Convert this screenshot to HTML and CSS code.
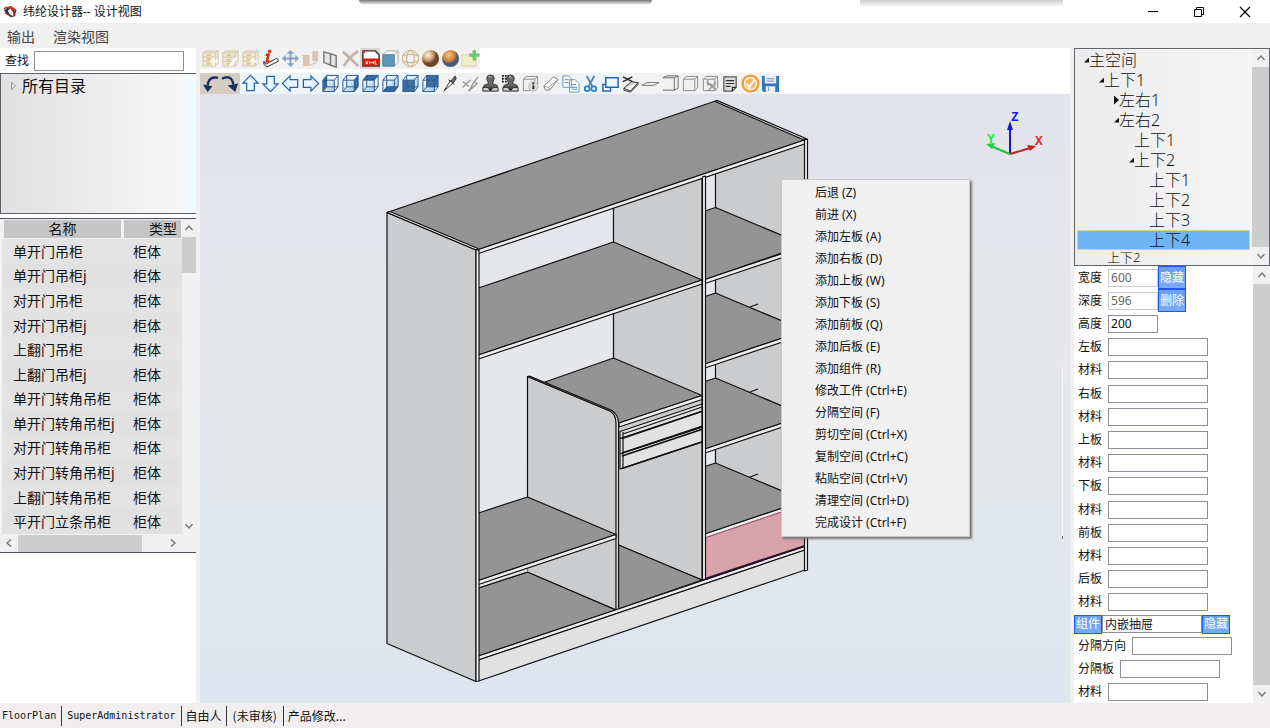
FILE: index.html
```html
<!DOCTYPE html>
<html lang="zh-CN">
<head>
<meta charset="utf-8">
<title>纬纶设计器-- 设计视图</title>
<link rel="stylesheet" href="styles.css">
</head>
<body>
<svg class="defs" aria-hidden="true">
  <defs>
    <symbol id="drawer" viewBox="0 0 20 20"><path d="M2 4l3-2h13v13l-3 3H2z" fill="#f2e3bb" stroke="#b9a88a"/><path d="M2 4h13v14M15 4l3-2M2 8.500h13M2 13h13" fill="none" stroke="#b9a88a"/><path d="M6 6.500h4M6 11h4M6 15.500h4" stroke="#d0a63c" stroke-width="2"/></symbol>
    <symbol id="wire" viewBox="0 0 20 20"><path d="M2 6.500h12v12H2zM6 1.500h12v12h-12zM2 6.500l4-5M14 6.500l4-5M14 18.500l4-5M2 18.500l4-5" fill="none" stroke="#2a568c"/></symbol>
    <symbol id="box" viewBox="0 0 20 20"><path d="M2.500 5.500h12v12h-12zM2.500 5.500l3-3h12v12l-3 3M14.500 5.500l3-3" fill="none" stroke="#888"/></symbol>
    <symbol id="stamp" viewBox="0 0 20 20"><path d="M8 10L6 5q0-4 4-4t4 4l-2 5 5 2v3H3v-3z" fill="#666" stroke="#333"/><path d="M2 14h16v4H2z" fill="#ccc" stroke="#222"/><path d="M8 3q2-1 3 1" stroke="#ddd" fill="none"/><path d="M7 15h6l-3 3z" fill="#111"/></symbol>
    <symbol id="arrow" viewBox="0 0 20 20"><path d="M10 1.500l8 8h-4v8H6v-8H2z" fill="#e9f5ff" stroke="#2a62a5" stroke-width="1.300"/></symbol>
    <symbol id="up" viewBox="0 0 10 10"><path d="M1.500 7L5 3l3.500 4" fill="none" stroke="#777" stroke-width="1.400"/></symbol>
    <radialGradient id="ball1" cx=".35" cy=".3"><stop offset="0" stop-color="#fff4de"/><stop offset=".6" stop-color="#d0a276"/><stop offset="1" stop-color="#6b4526"/></radialGradient>
    <radialGradient id="ball2" cx=".4" cy=".3"><stop offset="0" stop-color="#f8c880"/><stop offset=".7" stop-color="#cb8434"/><stop offset="1" stop-color="#4a5874"/></radialGradient>
    <linearGradient id="glass" x2="1" y2="1"><stop offset="0" stop-color="#fff"/><stop offset="1" stop-color="#9cc4ec"/></linearGradient>
  </defs>
</svg>

<header class="titlebar">
  <svg class="logo" viewBox="0 0 16 16" aria-hidden="true"><path d="M1 7l6-5 7 4-1 7-5 1-5-5z" fill="#333"/><path d="M4 4l5-2 6 5-3 1z" fill="#c9341d"/><path d="M5 7l3-2 3 4v4l-4-2z" fill="#eee"/><path d="M1 5l4-2M2 9l4 3M12 9v3" stroke="#a33" stroke-width="1.500"/></svg>
  <h1 class="title">纬纶设计器-- 设计视图</h1>
  <span class="shade shade-a"></span><span class="shade shade-b"></span>
  <div class="window-buttons">
    <button aria-label="最小化"><svg viewBox="0 0 12 12"><path d="M1 5.500h10" stroke="#000"/></svg></button>
    <button aria-label="还原"><svg viewBox="0 0 12 12"><path d="M1.500 3.500h7v7h-7zM3.500 3.500v-2h7v7h-2" fill="none" stroke="#000"/></svg></button>
    <button aria-label="关闭"><svg viewBox="0 0 12 12"><path d="M1 1l10 10M11 1L1 11" stroke="#000" stroke-width="1.200"/></svg></button>
  </div>
</header>
<nav class="menubar"><button>输出</button><button>渲染视图</button></nav>

<main class="workspace">
  <aside class="left">
    <div class="search"><label for="find">查找</label><input id="find" type="text"></div>
    <div class="catalog"><svg viewBox="0 0 6 10" aria-hidden="true"><path d="M.5 1l4 4-4 4z" fill="none" stroke="#999"/></svg><span>所有目录</span></div>
    <div class="library">
      <div class="library-body">
        <div class="table-wrap">
          <table>
            <thead><tr><th>名称</th><th class="kind">类型</th></tr></thead>
            <tbody>
              <tr><td>单开门吊柜</td><td>柜体</td></tr>
              <tr><td>单开门吊柜j</td><td>柜体</td></tr>
              <tr><td>对开门吊柜</td><td>柜体</td></tr>
              <tr><td>对开门吊柜j</td><td>柜体</td></tr>
              <tr><td>上翻门吊柜</td><td>柜体</td></tr>
              <tr><td>上翻门吊柜j</td><td>柜体</td></tr>
              <tr><td>单开门转角吊柜</td><td>柜体</td></tr>
              <tr><td>单开门转角吊柜j</td><td>柜体</td></tr>
              <tr><td>对开门转角吊柜</td><td>柜体</td></tr>
              <tr><td>对开门转角吊柜j</td><td>柜体</td></tr>
              <tr><td>上翻门转角吊柜</td><td>柜体</td></tr>
              <tr><td>平开门立条吊柜</td><td>柜体</td></tr>
            </tbody>
          </table>
        </div>
        <div class="scroll scroll-list"><svg><use href="#up"/></svg><i></i><svg class="down"><use href="#up"/></svg></div>
      </div>
      <div class="scroll-h"><svg class="to-left"><use href="#up"/></svg><i></i><svg class="to-right"><use href="#up"/></svg></div>
    </div>
  </aside>

  <section class="center">
    <div class="toolbars">
      <div class="toolbar">
        <button class="faded" aria-label="添加柜"><svg viewBox="0 0 20 20"><use href="#drawer"/><path d="M9 13h9M13.500 9v9" stroke="#fff" stroke-width="2"/></svg></button>
        <button class="faded" aria-label="编辑柜"><svg viewBox="0 0 20 20"><use href="#drawer"/><path d="M9 18l8-9" stroke="#fff" stroke-width="2.500"/></svg></button>
        <button class="faded" aria-label="删除柜"><svg viewBox="0 0 20 20"><use href="#drawer"/><path d="M10 13h8M10 13l4-3" stroke="#fff" stroke-width="2"/></svg></button>
        <button aria-label="信息"><svg viewBox="0 0 20 20"><path d="M3 13v3l3 3 12-6v-2l-2-1-11 6z" fill="#fff" stroke="#222"/><path d="M5 6h3L6 13h3" fill="none" stroke="#d42b16" stroke-width="2.500"/><circle cx="9" cy="2.500" r="2" fill="#e0452a"/></svg></button>
        <button class="half" aria-label="移动"><svg viewBox="0 0 20 20"><path d="M10 1l4 4h-3v4h4V6l4 4-4 4v-3h-4v4h3l-4 4-4-4h3v-4H5v3l-4-4 4-4v3h4V5H6z" fill="#5b82b8"/></svg></button>
        <button class="faded" aria-label="柱"><svg viewBox="0 0 20 20"><path d="M2 7h7v11H2zM12 2h6v11h-6z" fill="#c9a88f"/><path d="M2 7h7M9 17l8-3" stroke="#998"/></svg></button>
        <button aria-label="门"><svg viewBox="0 0 20 20"><path d="M3 3l7 2v12l-7-3zM10 5l6 2v12l-6-2z" fill="#e5e5e5" stroke="#777" stroke-width="1.500"/></svg></button>
        <button class="faded" aria-label="删除"><svg viewBox="0 0 20 20"><path d="M2 3q8 6 16 15M18 2Q8 9 3 18" fill="none" stroke="#a98a78" stroke-width="3"/></svg></button>
        <button class="warm" aria-label="导出XML"><svg viewBox="0 0 20 20"><path d="M2 2h13l4 4v12H2z" fill="#fff" stroke="#333" stroke-width="1.500"/><path d="M2 10h17v8H2z" fill="#d8190c"/><path d="M2 6l4-4H2z" fill="#e33"/><path d="M5 16l2-3M5 13l2 3M9 16v-3l2 2 2-2v3M15 12v4h2" stroke="#fff" fill="none"/></svg></button>
        <button aria-label="实体"><svg viewBox="0 0 20 20"><path d="M2 6l4-4h12v12l-4 4H2z" fill="#f7f7f7" stroke="#aaa"/><path d="M2 6h12v12H2z" fill="#5c96bc" stroke="#4f7f9f"/><path d="M14 6l4-4" stroke="#aaa"/></svg></button>
        <button class="half" aria-label="线框球"><svg viewBox="0 0 20 20"><g fill="none" stroke="#b58d3c"><circle cx="10" cy="10" r="8.500"/><ellipse cx="10" cy="10" rx="4" ry="8.500"/><path d="M2 7q8-3 16 0M2 13q8 3 16 0"/></g></svg></button>
        <button aria-label="材质球"><svg viewBox="0 0 20 20"><circle cx="10" cy="10" r="9" fill="url(#ball1)"/></svg></button>
        <button aria-label="渲染球"><svg viewBox="0 0 20 20"><circle cx="10" cy="10" r="9" fill="url(#ball2)"/></svg></button>
        <button class="half" aria-label="新建目录"><svg viewBox="0 0 20 20"><path d="M1 6h6l1 2h8v10H1z" fill="#f3ecb6" stroke="#ccc38b"/><path d="M14 1v11M8.500 6.500h11" stroke="#27bb3f" stroke-width="3.500"/></svg></button>
      </div>
      <div class="toolbar">
        <button class="tan" aria-label="撤销"><svg viewBox="0 0 20 20"><path d="M18 4Q8 2 7 12" fill="none" stroke="#15315c" stroke-width="2.500"/><path d="M2 11l10 2-5 6z" fill="#15315c"/></svg></button>
        <button class="tan" aria-label="重做"><svg viewBox="0 0 20 20"><path d="M1 5Q11 0 13 11" fill="none" stroke="#15315c" stroke-width="2.500"/><path d="M7 12l11-2-3 9z" fill="#15315c"/></svg></button>
        <button class="cool" aria-label="上"><svg><use href="#arrow"/></svg></button>
        <button class="cool" aria-label="下"><svg class="down"><use href="#arrow"/></svg></button>
        <button class="cool" aria-label="左"><svg class="to-left"><use href="#arrow"/></svg></button>
        <button class="cool" aria-label="右"><svg class="to-right"><use href="#arrow"/></svg></button>
        <button class="cool" aria-label="左视图"><svg viewBox="0 0 20 20"><path d="M2 6.500h12v12H2z" fill="url(#glass)"/><path d="M2 6.500l4-5v12l-4 5z" fill="#3568a8"/><use href="#wire"/></svg></button>
        <button class="cool" aria-label="右视图"><svg viewBox="0 0 20 20"><path d="M2 6.500h12v12H2z" fill="url(#glass)"/><path d="M14 6.500l4-5v12l-4 5z" fill="#3568a8"/><use href="#wire"/></svg></button>
        <button class="cool" aria-label="俯视图"><svg viewBox="0 0 20 20"><path d="M2 6.500h12v12H2z" fill="url(#glass)"/><path d="M2 6.500l4-5h12l-4 5z" fill="#3568a8"/><use href="#wire"/></svg></button>
        <button class="cool" aria-label="仰视图"><svg viewBox="0 0 20 20"><path d="M6 1.500h12v12H6z" fill="url(#glass)"/><path d="M2 18.500l4-5h12l-4 5z" fill="#3568a8"/><use href="#wire"/></svg></button>
        <button class="cool" aria-label="前视图"><svg viewBox="0 0 20 20"><path d="M2 6.500l4-5h12v12l-4 5z" fill="url(#glass)"/><path d="M2 6.500h12v12H2z" fill="#3f6f9f"/><use href="#wire"/></svg></button>
        <button class="cool" aria-label="后视图"><svg viewBox="0 0 20 20"><path d="M2 6.500h12v12H2z" fill="url(#glass)"/><path d="M6 1.500h12v12H6z" fill="#3f6f9f"/><use href="#wire"/></svg></button>
        <button aria-label="刀"><svg viewBox="0 0 20 20"><path d="M3 18l7-11 3 2z" fill="#fff" stroke="#333"/><path d="M10 8l5-6 1 3-3 4M8 6l6 5" stroke="#333" fill="#666"/></svg></button>
        <button class="faded" aria-label="合并"><svg viewBox="0 0 20 20"><path d="M8 18l6-10 3 2zM14 8l4-5M2 8l6 5M2 14l8-8" fill="none" stroke="#666" stroke-width="1.500"/></svg></button>
        <button aria-label="图章"><svg><use href="#stamp"/></svg></button>
        <button aria-label="图章列表"><svg viewBox="0 0 20 20"><use href="#stamp"/><path d="M1 2h7M1 5h6M1 8h6" stroke="#222" stroke-width="2" stroke-dasharray="2 1"/></svg></button>
        <button aria-label="空间信息"><svg viewBox="0 0 20 20"><use href="#box"/><circle cx="13" cy="13" r="5" fill="#ddd" stroke="#bbb"/><path d="M13 9v2M13 12v4" stroke="#222" stroke-width="2"/></svg></button>
        <button aria-label="橡皮"><svg viewBox="0 0 20 20"><path d="M3 13L13 3l5 3L9 17H5z" fill="#fff" stroke="#777"/><path d="M3 13l5 1 10-8M8 14l1 3" stroke="#999" fill="none"/></svg></button>
        <button class="cool" aria-label="复制"><svg viewBox="0 0 20 20"><path d="M2 2h6l3 3v9H2zM9 6h6l4 4v9H9z" fill="#fff" stroke="#6c8fb9"/><path d="M4 6h4M4 9h4M11 11h5M11 14h6M11 16h6" stroke="#438bd0"/></svg></button>
        <button class="cool" aria-label="剪切"><svg viewBox="0 0 20 20"><path d="M6 2l6 11M14 2L8 13" stroke="#5580a8" stroke-width="2"/><g fill="#fff" stroke="#1e82d5" stroke-width="2"><circle cx="6.500" cy="15.500" r="2.500"/><circle cx="13.500" cy="15.500" r="2.500"/></g></svg></button>
        <button class="cool" aria-label="缩放空间"><svg viewBox="0 0 20 20"><path d="M5 4h13v10H5zM5 11H2v7h8v-4" fill="#eef6ff" stroke="#2267b8" stroke-width="1.600"/></svg></button>
        <button aria-label="裁剪"><svg viewBox="0 0 20 20"><path d="M3 15l8-7 7 1-8 9zM3 15v2l7 2 8-8V9" fill="#ccc" stroke="#333"/><path d="M2 3l10 5M2 8l10-5" stroke="#222" stroke-width="1.300"/></svg></button>
        <button aria-label="水平板"><svg viewBox="0 0 20 20"><path d="M1 12l5-3h13l-5 3z" fill="#eee" stroke="#777"/></svg></button>
        <button aria-label="侧板"><svg viewBox="0 0 20 20"><path d="M2 4h12v13H2M2 4l4-2h12v13l-4 2M14 4l4-2" fill="none" stroke="#666"/></svg></button>
        <button aria-label="框"><svg><use href="#box"/></svg></button>
        <button aria-label="空间工具"><svg viewBox="0 0 20 20"><use href="#box"/><path d="M6 8l10 9M16 9l-8 8M7 6v5h5" stroke="#999" stroke-width="1.500" fill="none"/></svg></button>
        <button aria-label="备注"><svg viewBox="0 0 20 20"><path d="M3 3h13v11l-4 4H3z" fill="#ddd" stroke="#555" stroke-width="1.300"/><path d="M5 7h9M5 10h9M5 13h5M12 18v-4h4" stroke="#333" stroke-width="1.300" fill="none"/></svg></button>
        <button aria-label="完成"><svg viewBox="0 0 20 20"><circle cx="10" cy="10" r="8.300" fill="#fff6e5" stroke="#e9a044" stroke-width="2.500"/><circle cx="10" cy="10" r="5.500" fill="#f3b566"/><path d="M6 10l3 4 5-8" stroke="#fff" stroke-width="2" fill="none"/></svg></button>
        <button aria-label="保存"><svg viewBox="0 0 20 20"><path d="M1 2h18v17H3l-2-2z" fill="#3475b8"/><path d="M4 2h12v8H4zM5 13h10v6H5z" fill="#e7eff5"/><path d="M6 5h8M6 7.500h8M8 14v4" stroke="#758eaa"/></svg></button>
      </div>
    </div>

    <div class="stage">
      <svg class="scene" viewBox="200 94 870 609" preserveAspectRatio="xMinYMin meet" role="img" aria-label="柜体模型">
        <g fill="#cbccce" stroke="#111" stroke-width="1.200" stroke-linejoin="round">
          <path d="M387 212.500L476 250v431.500L387 643.500z"/>
          <path d="M613.500 207L702 177v403l-88.500-37z"/>
          <path d="M715.500 173L805 143v403l-89.500-40z"/>
          <path d="M478.500 288L613.500 242 702 280 478.500 355z" fill="#949495"/>
          <path d="M478.500 355L702 280v4L478.500 359z" fill="#eee"/>
          <path d="M545 382l68.500-24L702 395.500 619 423z" fill="#949495"/>
          <path d="M619 423l83-27.500v4L619 427z" fill="#eee"/>
          <path d="M478.500 588l49-16 88.500 38-137.500 46z" fill="#949495"/>
          <path d="M618.500 545l83.500 35-83.500 29z" fill="#949495"/>
          <path d="M527.500 376.500L610 411q6 3 6.500 12v187l-89-38z"/>
          <path d="M527.500 376.500l2-.5L611 410q7 4 7.500 13v187h-2.500V423q0-8-6-12z" fill="#eee"/>
          <path d="M478.500 584l49-16v4l-49 16z" fill="#e4e6e9" stroke="none"/>
          <path d="M478.500 588l49-16" fill="none"/>
          <path d="M478.500 513l49-16 88.500 37.500-137.500 46z" fill="#949495"/>
          <path d="M478.500 580.500L616 534.500v4L478.500 584.500z" fill="#eee"/>
          <path d="M705 211l10.500-3.500L805 245l-100 34.500z" fill="#949495"/><path d="M705 279.500L805 246v4L705 283.500z" fill="#eee"/>
          <path d="M705 296.500l10.500-3.500 89.500 37.500-100 33.500z" fill="#949495"/><path d="M705 364l100-33.500v4L705 368z" fill="#eee"/>
          <path d="M705 381.500l10.500-3.500 89.500 37.500-100 33.500z" fill="#949495"/><path d="M705 449l100-33.500v4L705 453z" fill="#eee"/>
          <path d="M705 466.500l10.500-3.500 89.500 37.500-100 33.500z" fill="#949495"/><path d="M705 534l100-33.500v4L705 538z" fill="#eee"/>
          <path d="M750 307l8-3M750 392l8-3M750 477l8-3" fill="none"/>
          <path d="M705 538l100-34v43l-100 33z" fill="#d8a3aa" stroke="#a86072"/>
          <path d="M620 431.500l82-27.500v38L620 469z" fill="#e2e2e2"/>
          <path d="M623 432v36M623 434l79-27M620 438.500l83-27.500M620 454l83-27" fill="none"/>
          <path d="M622 438.500l81-27.500M622 453l81-27M622 456l81-27M622 468.500l81-27" fill="none" stroke-width="1.800"/>
          <path d="M478.500 656L805 546v4L478.500 660z" fill="#eee"/>
          <path d="M478.500 660L805 550v20L478.500 681z" fill="#e1e1e2"/>
          <path d="M705 579l100-33" stroke="#26142c" stroke-width="2.200"/>
          <path d="M387 212.500L717 100.500 806 139.500 477 250z" fill="#949495"/>
          <path d="M477 250l329-110.500v4L477 254z" fill="#eee"/>
          <path d="M387 212.500l3-1L478 248.500l-2 1.500zM717 100.500l-2 1 88 38 3-1z" fill="#ddd"/>
          <path d="M476 250h3v431l-3 .5zM702.500 177l3-1v403l-3 1zM804.500 140l3-1v431l-3 1z" fill="#f3f3f3"/>
        </g>
        <path d="M1062.500 366v176" stroke="#f5f5f6"/><path d="M1062.500 536v3" stroke="#777"/>
        <g stroke-width="2" fill="none"><path d="M1010 154V126" stroke="#1216dc"/><path d="M1010 154l-17-7" stroke="#16c63a"/><path d="M1010 154l20-6" stroke="#c22222"/></g>
        <path d="M1010 121l-3 9h6z" fill="#1216dc"/><path d="M986 144l9-1-3 6z" fill="#16d63a"/><path d="M1036 146l-9-1 3 6z" fill="#c22222"/>
        <g class="axis"><text x="1011" y="121" fill="#1a1aee">Z</text><text x="987" y="143" fill="#19ec2e">Y</text><text x="1035" y="145" fill="#e22a1a">X</text></g>
      </svg>
      <div class="context-menu" role="menu">
        <button role="menuitem">后退 (Z)</button>
        <button role="menuitem">前进 (X)</button>
        <button role="menuitem">添加左板 (A)</button>
        <button role="menuitem">添加右板 (D)</button>
        <button role="menuitem">添加上板 (W)</button>
        <button role="menuitem">添加下板 (S)</button>
        <button role="menuitem">添加前板 (Q)</button>
        <button role="menuitem">添加后板 (E)</button>
        <button role="menuitem">添加组件 (R)</button>
        <button role="menuitem">修改工件 (Ctrl+E)</button>
        <button role="menuitem">分隔空间 (F)</button>
        <button role="menuitem">剪切空间 (Ctrl+X)</button>
        <button role="menuitem">复制空间 (Ctrl+C)</button>
        <button role="menuitem">粘贴空间 (Ctrl+V)</button>
        <button role="menuitem">清理空间 (Ctrl+D)</button>
        <button role="menuitem">完成设计 (Ctrl+F)</button>
      </div>
    </div>
  </section>

  <aside class="right">
    <div class="tree">
      <div class="tree-view">
        <ul>
          <li class="l0 open">主空间</li>
          <li class="l1 open">上下1</li>
          <li class="l2 shut">左右1</li>
          <li class="l2 open">左右2</li>
          <li class="l3">上下1</li>
          <li class="l3 open">上下2</li>
          <li class="l4">上下1</li>
          <li class="l4">上下2</li>
          <li class="l4">上下3</li>
          <li class="l4 selected">上下4</li>
          <li class="l1 last">上下2</li>
        </ul>
      </div>
      <div class="scroll scroll-tree"><svg><use href="#up"/></svg><i></i><svg class="down"><use href="#up"/></svg></div>
    </div>
    <div class="props">
      <form class="fields">
        <div class="board-fields">
          <div class="field"><label for="w">宽度</label><input id="w" class="short" value="600" disabled><button type="button" class="blue">隐藏</button></div>
          <div class="field"><label for="d">深度</label><input id="d" class="short" value="596" disabled><button type="button" class="blue">删除</button></div>
          <div class="field"><label for="h">高度</label><input id="h" class="short" value="200"></div>
          <div class="field"><label for="b1">左板</label><input id="b1"></div>
          <div class="field"><label for="m1">材料</label><input id="m1"></div>
          <div class="field"><label for="b2">右板</label><input id="b2"></div>
          <div class="field"><label for="m2">材料</label><input id="m2"></div>
          <div class="field"><label for="b3">上板</label><input id="b3"></div>
          <div class="field"><label for="m3">材料</label><input id="m3"></div>
          <div class="field"><label for="b4">下板</label><input id="b4"></div>
          <div class="field"><label for="m4">材料</label><input id="m4"></div>
          <div class="field"><label for="b5">前板</label><input id="b5"></div>
          <div class="field"><label for="m5">材料</label><input id="m5"></div>
          <div class="field"><label for="b6">后板</label><input id="b6"></div>
          <div class="field"><label for="m6">材料</label><input id="m6"></div>
        </div>
        <div class="component"><button type="button" class="blue">组件</button><input aria-label="组件" value="内嵌抽屉"><button type="button" class="blue">隐藏</button></div>
        <div class="field tail"><label for="dir">分隔方向</label><input id="dir"></div>
        <div class="field tail"><label for="sep">分隔板</label><input id="sep"></div>
        <div class="field tail"><label for="m7">材料</label><input id="m7"></div>
      </form>
      <div class="scroll scroll-props"><svg><use href="#up"/></svg><i></i><svg class="down"><use href="#up"/></svg></div>
    </div>
  </aside>
</main>
<footer class="status"><span>FloorPlan</span><span>SuperAdministrator</span><span class="cjk">自由人</span><span class="cjk audit">(未审核)</span><span class="cjk">产品修改...</span></footer>
</body>
</html>
```

FILE: styles.css
```css
* { box-sizing: border-box; }
body {
  margin: 0;
  height: 100vh;
  display: flex;
  flex-direction: column;
  overflow: hidden;
  background: #f0f0f0;
  color: #111;
  font: 12px/16px "Noto Sans", "Noto Sans CJK SC", sans-serif;
}
button, input { font: inherit; color: inherit; margin: 0; padding: 0; border: 0; background: none; border-radius: 0; }
button { white-space: nowrap; }
svg { display: block; }
.defs { position: absolute; width: 0; height: 0; }

.titlebar { position: relative; flex: none; height: 23px; background: #fff; display: flex; align-items: center; padding-left: 3px; }
.logo { width: 15px; height: 15px; }
.title { margin: 0 auto 0 5px; font-size: 12px; font-weight: 400; }
.shade { position: absolute; top: 0; height: 5px; background: linear-gradient(#777, #fff); }
.shade-a { left: 359px; width: 293px; border-radius: 0 0 6px 6px; }
.shade-b { left: 860px; width: 203px; height: 7px; background: linear-gradient(#ccc, #fff); }
.window-buttons { display: flex; position: relative; }
.window-buttons button { width: 46px; height: 22px; display: grid; place-items: center; }
.window-buttons button:last-child { margin-right: 2px; }
.window-buttons svg { width: 12px; height: 12px; }

.menubar { flex: none; height: 25px; display: flex; align-items: center; gap: 18px; padding: 2px 7px 0; font-size: 14px; color: #444; }

.workspace { flex: 1; min-height: 0; display: flex; gap: 4px; }
.left { width: 196px; flex: none; background: #fff; display: flex; flex-direction: column; }
.search { height: 25px; display: flex; align-items: center; gap: 5px; padding-left: 5px; }
.search input { width: 150px; height: 20px; border: 1px solid #8d8d99; }
.catalog {
  height: 141px;
  display: flex;
  gap: 5px;
  padding: 2px 0 0 10px;
  border: solid #5a6068;
  border-width: 1px 0 1px 1px;
  background: linear-gradient(90deg, #e1e1e1, #f7f7f7 180px, #effaff 184px);
  font-size: 16px;
  line-height: 20px;
}
.catalog svg { width: 6px; height: 10px; margin-top: 5px; }
.library { height: 335px; margin-top: 4px; border: solid #4c5264; border-width: 1px 0; background: #f3f3f3; display: flex; flex-direction: column; }
.library-body { flex: 1; min-height: 0; display: flex; }
.table-wrap { flex: 1; overflow: hidden; padding-left: 2px; }
table { width: 100%; height: 100%; border-collapse: separate; border-spacing: 0; table-layout: fixed; font-size: 14px; line-height: 18px; background: #e3e3e3; }
th { width: 120px; height: 20px; padding: 0; font-weight: 400; background: #c5c5c5; border: 1px solid #f1f1f1; border-left-width: 2px; }
th.kind { width: auto; text-align: right; padding-right: 4px; }
td { padding: 1px 0 0 11px; white-space: nowrap; }
tr:nth-child(even) td { background: #e1e1e1; }

.scroll { display: flex; flex-direction: column; align-items: center; background: #f0f0f0; }
.scroll svg { width: 10px; height: 10px; margin: 4px 0; flex: none; }
.scroll i { width: 100%; background: #cdcdcd; }
.down { transform: rotate(180deg); }
.to-left { transform: rotate(270deg); }
.to-right { transform: rotate(90deg); }
.scroll-list { width: 14px; }
.scroll-list i { height: 36px; }
.scroll-list .down { margin-top: auto; margin-bottom: 3px; }
.scroll-h { height: 18px; display: flex; align-items: center; background: #f0f0f0; padding: 0 18px 0 4px; }
.scroll-h svg { width: 10px; height: 10px; }
.scroll-h i { width: 124px; height: 17px; margin: 0 auto 0 4px; background: #cdcdcd; }

.center { flex: 1; min-width: 0; display: flex; flex-direction: column; }
.toolbars { height: 46px; flex: none; display: flex; flex-direction: column; gap: 4px; background: #fff; }
.toolbar { display: flex; height: 21px; }
.toolbar button { width: 20px; height: 21px; display: grid; place-items: center; background: #f1f1f1; }
.toolbar svg { width: 19px; height: 19px; }
.toolbar .faded svg { opacity: .6; }
.toolbar .half svg { opacity: .7; }
.toolbar .tan { background: #d5ccc4; }
.toolbar .warm { background: #ddd6d0; }
.toolbar .cool { background: #ecf4fc; }

.stage { position: relative; flex: 1; min-height: 0; overflow: hidden; background: linear-gradient(#e1e3ea, #e6e8eb 45%, #e3e8ec 70%, #dee4f0); }
.scene { width: 100%; height: 100%; }
.axis { font: bold 13px "Liberation Mono", monospace; }
.context-menu {
  position: absolute;
  left: 581px;
  top: 85px;
  width: 189px;
  padding: 2px 0;
  display: flex;
  flex-direction: column;
  background: #f0f0f0;
  border: 1px solid #c9c9c9;
  box-shadow: 2px 2px 2px #777;
}
.context-menu button { height: 22px; padding-left: 33px; text-align: left; }

.right { width: 196px; flex: none; display: flex; flex-direction: column; background: #fff; }
.tree { height: 218px; flex: none; display: flex; border: 1px solid #60656d; background: linear-gradient(90deg, #ececec, #f6f6f6); }
.tree-view { flex: 1; overflow: hidden; padding: 1px 2px; }
.tree ul { list-style: none; margin: 0; padding: 0; height: 214px; display: flex; flex-direction: column; font-size: 16px; line-height: 18px; font-weight: 300; }
.tree li { flex: 1; display: flex; align-items: center; border: 1px solid transparent; }
.tree li::before { content: ""; width: 5px; height: 5px; }
.tree .open::before { background: #111; clip-path: polygon(100% 0, 100% 100%, 0 100%); }
.tree .shut::before { height: 9px; background: #111; clip-path: polygon(0 0, 100% 50%, 0 100%); }
.l0 { padding-left: 6px; }
.l1 { padding-left: 21px; }
.l2 { padding-left: 36px; }
.l3 { padding-left: 51px; }
.l4 { padding-left: 66px; }
.tree .selected { background: #6db6f3; border-color: #d5d09a; }
.tree .last { flex: none; height: 14px; font-size: 13px; line-height: 12px; padding-left: 24px; }
.scroll-tree { width: 17px; }
.scroll-tree i { flex: 1; }

.props { flex: 1; min-height: 0; display: flex; }
.fields { flex: 1; display: flex; flex-direction: column; }
.board-fields { flex: 1; display: grid; grid-auto-rows: 1fr; }
.field { display: flex; align-items: center; padding-left: 4px; }
.field label { margin-right: 6px; }
.tail { height: 23px; }
.fields input { width: 100px; height: 18px; border: 1px solid #8d8d99; padding: 0 2px; background: #fff; }
.fields .short { width: 50px; }
.fields input:disabled { border-color: #c8c8c8; color: #666; }
.blue { width: 28px; height: 23px; text-align: center; color: #fff; background: linear-gradient(#6a9ff2, #7aaaf8); border: 1px solid #2058ea; }
.component { height: 20px; display: flex; align-items: center; }
.component .blue { height: 19px; line-height: 16px; }
.scroll-props { width: 17px; }
.scroll-props i { flex: 1; }

.status { flex: none; height: 25px; display: flex; align-items: center; background: #f0eeee; font: 10px/20px "DejaVu Sans Mono", "Noto Sans CJK SC", monospace; }
.status span { height: 20px; padding: 0 5px; border-left: 1px solid #333; }
.status span:first-child { border: 0; padding-left: 2px; }
.status .cjk { font: 12px/20px "Noto Sans CJK SC", sans-serif; padding: 0 4px; }
.status .audit { padding: 0 6px; }
```
